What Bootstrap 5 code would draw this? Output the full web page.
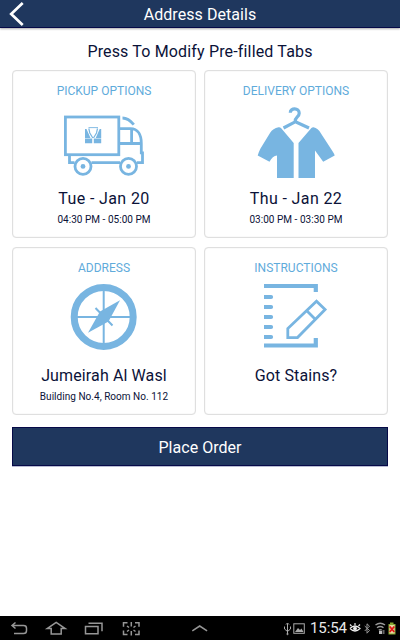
<!DOCTYPE html>
<html lang="en">
<head>
<meta charset="utf-8">
<meta name="viewport" content="width=device-width, initial-scale=1">
<title>Address Details</title>
<link href="https://cdn.jsdelivr.net/npm/bootstrap@5.3.0/dist/css/bootstrap.min.css" rel="stylesheet">
<style>
body{font-family:Roboto,"Liberation Sans",sans-serif;color:#0b1238;background:#fff;font-size:16px;line-height:22px;overflow:hidden}
svg{display:block;flex:none}
.topbar{height:28px;background:#1f375e;border-bottom:1px solid #060a48;box-shadow:0 1px 2px #aaa;color:#fff}
.topbar .side{width:40px}
.page-title{font-size:16px;letter-spacing:.06px;line-height:26px;padding-top:2px}
.prompt{height:42px;padding-top:13px;letter-spacing:.16px}
.tiles{display:grid;grid-template-columns:184px 184px;gap:9px 8px}
.tile{height:168px;border:1px solid #dfdfdf;border-radius:4px;box-shadow:inset 0 0 1px #ccc;padding-top:11px;color:inherit}
.tile-name{font-size:12px;line-height:18px;color:#5fabdb;margin-bottom:2px}
.tile-main{line-height:22px;margin-top:6px;letter-spacing:.12px}
.tile-main.date{letter-spacing:.38px}
.tile-sub{font-size:10px;line-height:14px;margin-top:3px;letter-spacing:.03px}
.art{stroke:#78b5e1;fill:none;stroke-width:2.8}
.solid{fill:#78b5e1;stroke:none}
.order,.order:hover{height:39px;margin-top:12px;background:#1f375e;border:1px solid #060a48;border-radius:0;box-shadow:0 1px 0 #b9bdd4;color:#fff;padding:2px 0 0;letter-spacing:.03px}
.sysbar{height:24px;background:#000;color:#e8e8e8}
.sysbar .group{flex:1 1 0}
.sysbar .nav-ic{stroke:#969696;fill:none;stroke-width:1.5}
.clock{font-size:15px;line-height:25px;width:39px;padding-left:1px;letter-spacing:-.1px}
</style>
</head>
<body>
<div class="d-flex flex-column vh-100">
  <header class="topbar d-flex align-items-center justify-content-between">
    <div class="side"><svg width="40" height="27" viewBox="0 0 40 27"><path d="M22.7 3 11.2 14 22.7 25" fill="none" stroke="#fff" stroke-width="2.7"/></svg></div>
    <div class="page-title">Address Details</div>
    <div class="side"></div>
  </header>
  <main class="flex-grow-1 px-0">
    <div class="prompt text-center">Press To Modify Pre-filled Tabs</div>
    <div class="tiles justify-content-center">
      <div class="tile text-center">
        <div class="tile-name">PICKUP OPTIONS</div>
        <svg class="art" width="182" height="80" viewBox="13 102 182 80">
          <rect x="65.4" y="117" width="53.4" height="37.7"/>
          <path d="M69.5 156v6.6h5M91.500 162.600h28.500M120 128.600h10.500c7.500 0 10.800 6.400 10.800 14.800v9.500h1.200v9.700h-5.500M120 143.500h21.300M131.600 129v14.500M122.500 118c4.500 0 8 2.600 11.300 6.600"/>
          <circle cx="83" cy="166.400" r="8"/><circle cx="128.500" cy="166.400" r="8"/>
          <g class="solid"><circle cx="83" cy="166.400" r="2.400"/><circle cx="128.500" cy="166.400" r="2.400"/>
          <path d="M85 129h1.500l4 9H85zM101.200 129h-1.500l-4 9h5.500zM85 138.600h7.200v4.700H85zM93.800 138.600h7.400v4.700h-7.400z"/></g>
          <path d="M88.800 128.500l1 4.500 3 5M97.500 128.500l-1 4.500-3 5" stroke-width="1.200"/><path d="M88.500 127.600h9.500" stroke-width=".9"/>
        </svg>
        <div class="tile-main date">Tue - Jan 20</div>
        <div class="tile-sub">04:30 PM - 05:00 PM</div>
      </div>
      <div class="tile text-center">
        <div class="tile-name">DELIVERY OPTIONS</div>
        <svg class="art" width="182" height="80" viewBox="205 102 182 80">
          <path d="M290.300 112.800c-.2-5.200 9-5.200 8.900.4 0 3.900-4.200 3.800-4 8.300M283.500 128l12-6.300 13.500 6.300" stroke-width="3.200"/>
          <path class="solid" d="M278.500 127.300q1.300-.4 2.500.8L293.700 143v35H277v-22.500q-4.500.5-7.500 6.300L257.700 155.500q1-3.500 2.800-7l9.500-15.500q3-4.800 8.500-5.700zM313.500 127.300q-1.200-.1-2.100.8L298.500 143v35H315v-27.500l8.200 11.300 11.500-6.300q-.4-1.500-2-4L321 133.500q-3-5.200-7.500-6.200z"/>
        </svg>
        <div class="tile-main date">Thu - Jan 22</div>
        <div class="tile-sub">03:00 PM - 03:30 PM</div>
      </div>
      <div class="tile text-center">
        <div class="tile-name">ADDRESS</div>
        <svg class="art" width="182" height="80" viewBox="13 279 182 80">
          <circle cx="103.700" cy="316.900" r="29.500" stroke-width="7"/>
          <path d="M103.700 288v58M75 316.900h58M95.500 308l17 17.500" stroke-width="2"/>
          <path class="solid" d="M120 300.300l-11.500 21.200L88 332.700l12-21.200z"/>
        </svg>
        <div class="tile-main">Jumeirah Al Wasl</div>
        <div class="tile-sub">Building No.4, Room No. 112</div>
      </div>
      <div class="tile text-center">
        <div class="tile-name">INSTRUCTIONS</div>
        <svg class="art" width="182" height="80" viewBox="205 279 182 80">
          <path d="M264 286h51.800v6M264 345.500h51.800v-7.500" stroke-width="4.200"/>
          <path d="M264 297h7M264 307h7M264 317h7M264 327h7M264 337h7" stroke-width="4"/>
          <path d="M271 297h.1M271 307h.1M271 317h.1M271 327h.1M271 337h.1" stroke-width="4" stroke-linecap="round"/>
          <path d="M287.800 337.600v-9l28.700-27.400 8.600 8.400-27.600 28zM306.500 310.500l9 9"/>
        </svg>
        <div class="tile-main">Got Stains?</div>
      </div>
    </div>
    <div class="px-2 mx-1"><button type="button" class="btn order w-100 d-block">Place Order</button></div>
  </main>
  <footer class="sysbar d-flex">
    <div class="group d-flex">
      <svg class="nav-ic" width="38" height="24" viewBox="0 616 38 24"><path d="M15.500 622.500l-3.500 3 3.500 3M12 625.500h11.500q3 0 3 2.700v2.500q0 2.800-3 2.800H14"/></svg>
      <svg class="nav-ic" width="38" height="24" viewBox="38 616 38 24"><path d="M56.200 622.300l-9 6.300h4v5.400h10v-5.400h4z"/></svg>
      <svg class="nav-ic" width="36" height="24" viewBox="76 616 36 24"><path d="M85.500 626.500h12.500v7.300H85.500zM88.500 623.300h13.500v8"/></svg>
      <svg class="nav-ic" width="38" height="24" viewBox="112 616 38 24"><path d="M127.500 622.800h-4v4M135 622.800h4v4M127.500 634.500h-4v-4M135 634.500h4v-4M131.300 622v4.500M131.300 631v4.500M127 626l2 1.500M135.500 626l-2 1.500M127 631.500l2-1.500M135.500 631.500l-2-1.500"/></svg>
    </div>
    <svg class="nav-ic" width="32" height="24" viewBox="184 616 32 24"><path d="M192.300 630.800l7.400-4.800 7.400 4.800"/></svg>
    <div class="group d-flex justify-content-end">
      <svg width="27" height="24" viewBox="282 616 27 24" fill="none" stroke="#aaa"><path d="M287.500 623.500v11M284.500 626.500v2.500l3 2.500 3-2.500v-2.500M286 624.500l1.500-1.500 1.500 1.500"/><circle cx="287.500" cy="634" r=".7"/><rect x="293.800" y="623.800" width="10.500" height="9.500"/><path fill="#aaa" stroke="none" d="M295 632l3-4 2 2 1.500-1.500 2 3.500z"/></svg>
      <div class="clock">15:54</div>
      <svg width="52" height="24" viewBox="348 616 52 24" fill="none" stroke="#eee"><path stroke-width="1.200" d="M350 628.500q5-5 10 0-5 5-10 0M351.500 626l-1.500-1.500M355 625v-2M358.500 626l1.500-1.500"/><circle cx="355" cy="628.500" r="1.500" fill="#eee"/><path stroke="#999" d="M364.700 626l4.800 4.500-2.500 2.700v-9.400l2.500 2.400-4.800 4.800"/><path stroke="#999" stroke-width="1.400" d="M375.500 625q4.700-3.500 9.500 0M377 627.800q3.300-2.500 6.500 0M378.800 630.200q1.500-1 3 0"/><path fill="#bbb" stroke="none" d="M379 631h3v3h-3z"/><path fill="#666" stroke="none" d="M382.500 630h2v4h-2z"/><path fill="#85a832" stroke="none" d="M390 622.500h3.500v1.500h2v10.500H388.500V624h1.500z"/><path fill="#e6d9a0" stroke="none" d="M389.500 625h5v8.500h-5z"/><path stroke="#e01818" stroke-width="1.800" d="M389.700 626.500l4.600 5.500M394.300 626.500l-4.600 5.500"/></svg>
    </div>
  </footer>
</div>
<script src="https://cdn.jsdelivr.net/npm/bootstrap@5.3.0/dist/js/bootstrap.bundle.min.js"></script>
</body>
</html>
